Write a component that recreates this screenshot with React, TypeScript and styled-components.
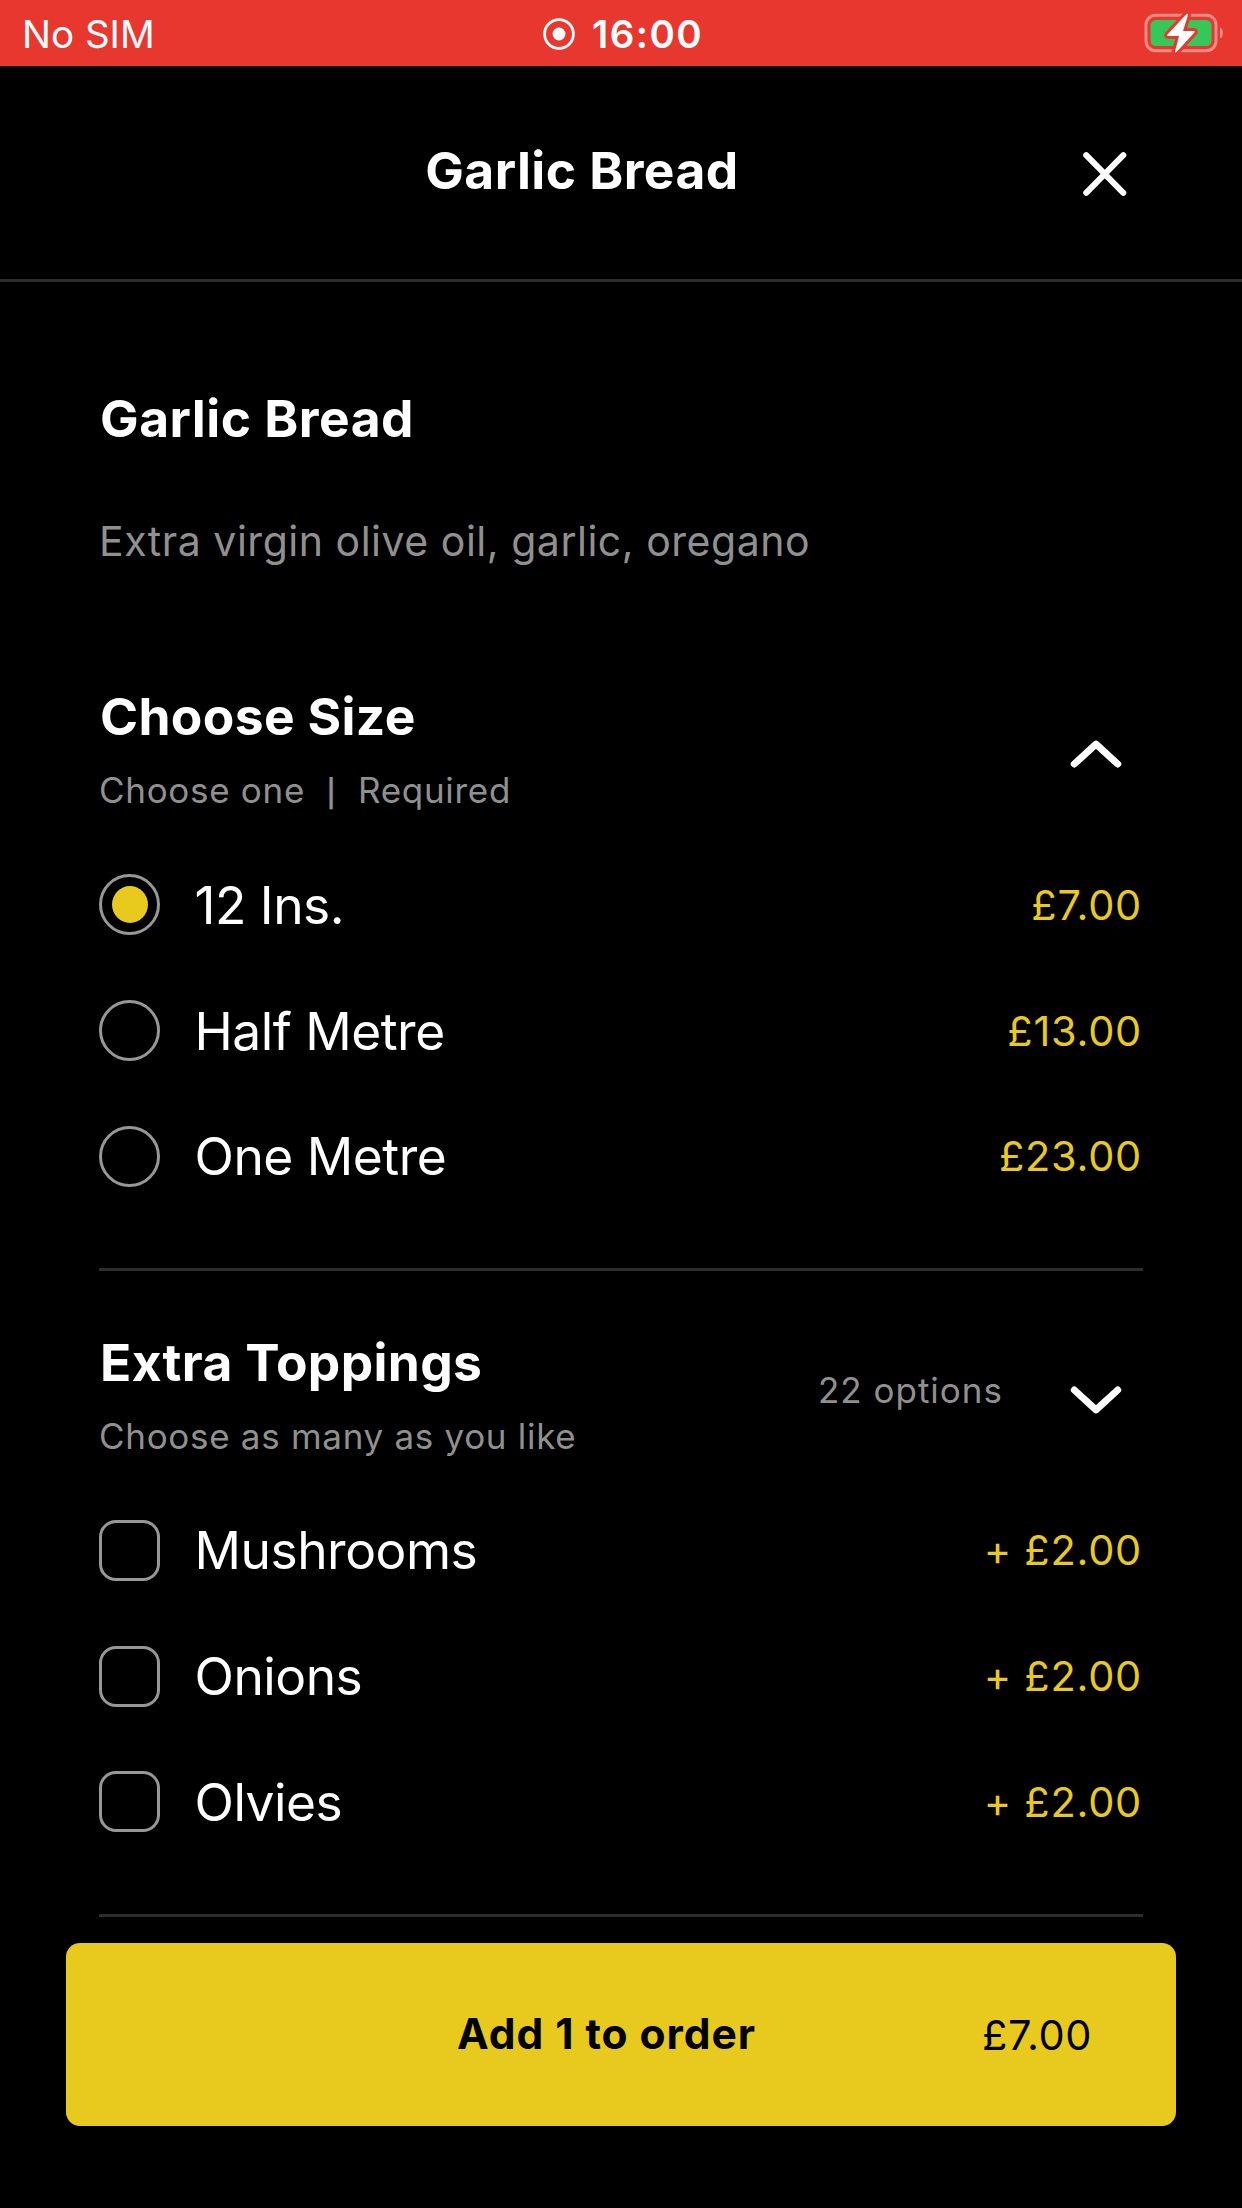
import React, { useState } from "react";
import styled, { createGlobalStyle } from "styled-components";

const YELLOW = "#e8ca1e";
const GREY = "#909090";
const LINE = "#2d2d2d";

const GlobalStyle = createGlobalStyle`
  * { box-sizing: border-box; }
  body {
    margin: 0;
    background: #000;
    color: #fff;
    font-family: Inter, "Liberation Sans", sans-serif;
  }
`;

const Screen = styled.div`
  display: flex;
  flex-direction: column;
  width: 1242px;
  height: 2208px;
  overflow: hidden;
  background: #000;
`;

const StatusBar = styled.div`
  display: grid;
  grid-template-columns: 1fr auto 1fr;
  align-items: center;
  height: 66px;
  padding: 2px 18px 0 22px;
  background: #e8372f;
`;

const Carrier = styled.span`
  font-size: 38.5px;
  line-height: 46px;
`;

const Clock = styled.div`
  display: flex;
  align-items: center;
  gap: 17px;
  font-size: 38.5px;
  line-height: 46px;
  font-weight: 600;
  letter-spacing: 1.4px;
`;

const BatterySlot = styled.div`
  display: flex;
  justify-content: flex-end;
  padding-bottom: 2px;
`;

const Header = styled.header`
  display: flex;
  align-items: center;
  height: 216px;
  padding: 0 115px 1px 81px;
  border-bottom: 3px solid ${LINE};
`;

const HeaderTitle = styled.h1`
  flex: 1;
  margin: 0;
  padding-bottom: 5px;
  text-align: center;
  font-size: 51.5px;
  line-height: 60px;
  font-weight: 700;
  letter-spacing: 0.45px;
`;

const IconButton = styled.button`
  display: flex;
  padding: 0;
  border: 0;
  background: none;
  color: #fff;
`;

const CloseButton = styled(IconButton)`
  padding-top: 4px;
`;

const Content = styled.main`
  display: flex;
  flex-direction: column;
  flex-shrink: 0;
  height: 1661px;
  padding: 106px 99px 0 99px;
`;

const Heading = styled.h2`
  margin: 0;
  padding-left: 1px;
  font-size: 51.5px;
  line-height: 60px;
  font-weight: 700;
  letter-spacing: 0.35px;
  white-space: nowrap;
`;

const ProductName = styled(Heading)`
  letter-spacing: 0.5px;
`;

const Description = styled.p`
  margin: 68px 0 120px;
  font-size: 41px;
  line-height: 50px;
  letter-spacing: 0.52px;
  color: ${GREY};
`;

const Section = styled.section`
  flex: none;
  height: 585px;
  margin-bottom: 60.5px;
  border-bottom: 3px solid ${LINE};

  &:last-child {
    margin-bottom: 0;
  }
`;

const SectionHeader = styled.div`
  display: flex;
  align-items: center;
  height: 124px;
  margin-bottom: 32px;
  padding-right: 21px;
`;

const SectionText = styled.div`
  display: flex;
  flex: 1;
  flex-direction: column;
  gap: 24px;
`;

const Note = styled.span`
  font-size: 35px;
  line-height: 40px;
  letter-spacing: 0.7px;
  color: ${GREY};
`;

const Bar = styled.span`
  display: inline-block;
  width: 53px;
  font-size: 27px;
  line-height: 30px;
  font-weight: 600;
  text-align: center;
`;

const OptionCount = styled(Note)`
  margin: 0 67px 8px 0;
  letter-spacing: 1px;
`;

const Toggle = styled(IconButton)`
  padding-top: 12px;
`;

const Row = styled.label`
  display: flex;
  align-items: center;
  height: 125.8px;
`;

const Mark = styled.span<{ $round: boolean }>`
  display: flex;
  align-items: center;
  justify-content: center;
  width: 61px;
  height: 61px;
  margin: 0 34px 0 0;
  border: 3px solid #979797;
  border-radius: ${(p) => (p.$round ? "50%" : "17px")};
`;

const Dot = styled.span`
  width: 36px;
  height: 37px;
  border-radius: 50%;
  background: ${YELLOW};
`;

const Label = styled.span`
  flex: 1;
  padding-left: 0.5px;
  font-size: 51.5px;
  line-height: 60px;
  letter-spacing: -0.5px;
`;

const Price = styled.span`
  padding-right: 1px;
  font-size: 41.5px;
  line-height: 50px;
  letter-spacing: 0.75px;
  color: ${YELLOW};
`;

const OrderButton = styled.button`
  display: grid;
  grid-template-columns: 1fr auto 1fr;
  align-items: center;
  width: 1110px;
  height: 183px;
  margin: 0 auto;
  padding: 0 84px 0 55px;
  border: 0;
  border-radius: 14px;
  background: ${YELLOW};
  color: #000;
  font-family: inherit;
`;

const OrderLabel = styled.span`
  grid-column: 2;
  padding-bottom: 2px;
  font-size: 42.5px;
  line-height: 50px;
  font-weight: 700;
  letter-spacing: 0.95px;
`;

const OrderTotal = styled.span`
  justify-self: end;
  padding-top: 1px;
  font-size: 41.5px;
  line-height: 50px;
  letter-spacing: 0.6px;
`;

const RecordIcon = () => (
  <svg width="32" height="32" viewBox="0 0 32 32">
    <circle cx="16" cy="16" r="14.4" fill="none" stroke="#fff" strokeWidth="2.8" />
    <circle cx="16" cy="16" r="6.4" fill="#fff" />
  </svg>
);

const BatteryIcon = () => (
  <svg width="80" height="42" viewBox="0 0 80 42">
    <rect x="2" y="3.3" width="70" height="35.4" rx="9.5" fill="none" stroke="#fff" strokeOpacity="0.42" strokeWidth="3" />
    <path d="M76 15.500c1.800.6 2.800 2.500 2.800 5.500s-1 4.900-2.800 5.500z" fill="#fff" fillOpacity="0.42" />
    <rect x="6.500" y="8" width="61" height="26" rx="5.500" fill="#35c759" />
    <path
      d="M42.500 2 23.500 22.500q-1 1.500 1 1.500h10.500L31 39.500q0 1.500 1.500.5L50.500 20.500q1-1.500-1-1.500H39L44 3q0-2-1.500-1z"
      fill="#fff"
      stroke="#e8372f"
      strokeWidth="6"
      strokeLinejoin="round"
      paintOrder="stroke"
    />
  </svg>
);

const CloseIcon = () => (
  <svg width="44" height="44" viewBox="0 0 44 44" fill="none" stroke="currentColor" strokeWidth="6" strokeLinecap="round">
    <path d="M3.200 3.200 40.300 40.800M40.300 3.200 3.200 40.800" />
  </svg>
);

const Chevron = ({ up }: { up: boolean }) => (
  <svg
    width="52"
    height="28"
    viewBox="0 0 52 28"
    fill="none"
    stroke="currentColor"
    strokeWidth="7"
    strokeLinecap="round"
    strokeLinejoin="round"
  >
    <path d={up ? "M4.300 24 26 4.200 47.700 24" : "M4.300 4 26 23.800 47.700 4"} />
  </svg>
);

const SIZES = [
  { name: "12 Ins.", price: "£7.00" },
  { name: "Half Metre", price: "£13.00" },
  { name: "One Metre", price: "£23.00" },
];

const TOPPINGS = [
  { name: "Mushrooms", price: "+ £2.00" },
  { name: "Onions", price: "+ £2.00" },
  { name: "Olvies", price: "+ £2.00" },
];

export default function App() {
  const [size, setSize] = useState(0);

  return (
    <Screen>
      <GlobalStyle />
      <StatusBar>
        <Carrier>No SIM</Carrier>
        <Clock>
          <RecordIcon />
          <span>16:00</span>
        </Clock>
        <BatterySlot>
          <BatteryIcon />
        </BatterySlot>
      </StatusBar>

      <Header>
        <HeaderTitle>Garlic Bread</HeaderTitle>
        <CloseButton aria-label="Close">
          <CloseIcon />
        </CloseButton>
      </Header>

      <Content>
        <ProductName>Garlic Bread</ProductName>
        <Description>Extra virgin olive oil, garlic, oregano</Description>

        <Section>
          <SectionHeader>
            <SectionText>
              <Heading>Choose Size</Heading>
              <Note>
                Choose one<Bar>|</Bar>Required
              </Note>
            </SectionText>
            <Toggle aria-label="Collapse">
              <Chevron up />
            </Toggle>
          </SectionHeader>
          {SIZES.map((item, i) => (
            <Row key={item.name} onClick={() => setSize(i)}>
              <Mark $round>{size === i && <Dot />}</Mark>
              <Label>{item.name}</Label>
              <Price>{item.price}</Price>
            </Row>
          ))}
        </Section>

        <Section>
          <SectionHeader>
            <SectionText>
              <Heading>Extra Toppings</Heading>
              <Note>Choose as many as you like</Note>
            </SectionText>
            <OptionCount>22 options</OptionCount>
            <Toggle aria-label="Expand">
              <Chevron up={false} />
            </Toggle>
          </SectionHeader>
          {TOPPINGS.map((item) => (
            <Row key={item.name}>
              <Mark $round={false} />
              <Label>{item.name}</Label>
              <Price>{item.price}</Price>
            </Row>
          ))}
        </Section>
      </Content>

      <OrderButton>
        <OrderLabel>Add 1 to order</OrderLabel>
        <OrderTotal>{SIZES[size].price}</OrderTotal>
      </OrderButton>
    </Screen>
  );
}
